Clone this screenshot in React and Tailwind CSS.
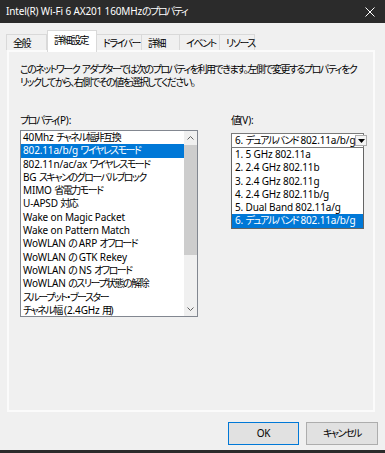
import React from 'react';

const properties = [
  '40Mhz チャネル幅非互換',
  '802.11a/b/g ワイヤレスモード',
  '802.11n/ac/ax ワイヤレスモード',
  'BG スキャンのグローバルブロック',
  'MIMO 省電力モード',
  'U-APSD 対応',
  'Wake on Magic Packet',
  'Wake on Pattern Match',
  'WoWLAN の ARP オフロード',
  'WoWLAN の GTK Rekey',
  'WoWLAN の NS オフロード',
  'WoWLAN のスリープ状態の解除',
  'スループット・ブースター',
  'チャネル幅 (2.4GHz 用)',
];

const values = [
  '1. 5 GHz 802.11a',
  '2. 2.4 GHz 802.11b',
  '3. 2.4 GHz 802.11g',
  '4. 2.4 GHz 802.11b/g',
  '5. Dual Band 802.11a/g',
  '6. デュアルバンド 802.11a/b/g',
];

const tabs = [
  { label: '全般', w: 'w-[41px]' },
  { label: '詳細設定', w: 'w-[50px]', active: true },
  { label: 'ドライバー', w: 'w-[46px]' },
  { label: '詳細', w: 'w-[39px]' },
  { label: 'イベント', w: 'w-[41px]' },
  { label: 'リソース', w: 'w-[36px]' },
];

// Japanese runs get tighter spacing so they come out as narrow as the UI font in the shot
const CJK = /([\u3000-\u30ff\u4e00-\u9fff\uff00-\uffef]+)/;
const J = ({ children }) =>
  String(children)
    .split(CJK)
    .map((part, i) =>
      CJK.test(part) ? (
        <span key={i} className="tracking-[-1.5px]">
          {part}
        </span>
      ) : (
        part
      )
    );

const Chevron = ({ up }) => (
  <svg width="7" height="4" viewBox="0 0 7 4" className="text-[#606060]">
    <path
      d={up ? 'M0.5 3.5 L3.5 0.5 L6.5 3.5' : 'M0.5 0.5 L3.5 3.5 L6.5 0.5'}
      fill="none"
      stroke="currentColor"
      strokeWidth="1"
    />
  </svg>
);

const PropertyList = () => (
  <div className="flex h-[187px] w-[178px] border border-[#828790] bg-white">
    <div className="min-w-0 flex-1 overflow-hidden">
      {properties.map((p, i) => (
        <div
          key={p}
          className={
            i === 1
              ? 'h-[13.3px] whitespace-nowrap bg-[#0078d7] pl-[2px] leading-[13.3px] text-white'
              : 'h-[13.3px] whitespace-nowrap pl-[2px] leading-[13.3px]'
          }
        >
          <J>{p}</J>
        </div>
      ))}
    </div>
    {/* scrollbar */}
    <div className="flex w-[13px] flex-col bg-[#f0f0f0]">
      <div className="flex h-[14px] items-center justify-center">
        <Chevron up />
      </div>
      <div className="h-[110px] bg-[#cdcdcd]" />
      <div className="flex-1" />
      <div className="flex h-[14px] items-center justify-center">
        <Chevron />
      </div>
    </div>
  </div>
);

const ValueSelect = () => (
  <div className="w-[133px]">
    <div className="flex h-[15px] items-center justify-between border border-[#7a7a7a] bg-white pl-[3px] pr-[1px]">
      <span className="whitespace-nowrap leading-[13px]">
        <J>{values[5]}</J>
      </span>
      <span className="flex h-[11px] w-[12px] shrink-0 items-center justify-center border border-[#adadad] bg-[#f4f4f4]">
        <svg width="7" height="4" viewBox="0 0 7 4">
          <path d="M0 0 H7 L3.5 4 Z" fill="#000" />
        </svg>
      </span>
    </div>
    <div className="border border-t-0 border-[#646464] bg-white">
      {values.map((v, i) => (
        <div
          key={v}
          className={
            i === 5
              ? 'h-[13.3px] whitespace-nowrap bg-[#0078d7] pl-[3px] leading-[13.3px] text-white'
              : 'h-[13.3px] whitespace-nowrap pl-[3px] leading-[13.3px]'
          }
        >
          <J>{v}</J>
        </div>
      ))}
    </div>
  </div>
);

export default function App() {
  return (
    <div className="flex h-[453px] w-[385px] flex-col overflow-hidden bg-[#f0f0f0] font-[family-name:'Noto_Sans','Noto_Sans_CJK_JP',sans-serif] text-[10px] tracking-[-0.15px] text-black [font-feature-settings:'palt']">
      {/* Title bar */}
      <div className="flex h-[23px] shrink-0 items-center justify-between bg-[#2b2b2b] pl-[6px] pr-[10px] text-white">
        <span className="whitespace-nowrap">
          <J>Intel(R) Wi-Fi 6 AX201 160MHzのプロパティ</J>
        </span>
        <svg width="10" height="10" viewBox="0 0 10 10">
          <path d="M0.5 0.5 L9.5 9.5 M9.5 0.5 L0.5 9.5" stroke="#fff" strokeWidth="1" />
        </svg>
      </div>

      {/* Tabs */}
      <div className="flex h-[27px] shrink-0 items-end pl-[6px]">
        {tabs.map((t) =>
          t.active ? (
            <div
              key={t.label}
              className={`${t.w} relative z-10 -mb-[2px] h-[22px] whitespace-nowrap border border-b-0 border-[#d9d9d9] bg-white pl-[6px] pt-[3px] leading-[13px]`}
            >
              <J>{t.label}</J>
            </div>
          ) : (
            <div
              key={t.label}
              className={`${t.w} -ml-px h-[16px] whitespace-nowrap border border-b-0 border-[#d9d9d9] bg-[#f0f0f0] pl-[6px] pt-[2px] leading-[12px] first:ml-0`}
            >
              <J>{t.label}</J>
            </div>
          )
        )}
      </div>

      {/* Tab panel */}
      <div className="ml-[7px] mr-[10px] h-[362px] shrink-0 border-2 border-[#fbfbfb] pl-[11px] pt-[11px]">
        <p className="whitespace-nowrap leading-[13px]">
          <J>このネットワーク アダプターでは次のプロパティを利用できます。左側で変更するプロパティをク</J>
          <br />
          <J>リックしてから、右側でその値を選択してください。</J>
        </p>

        <div className="mt-[25px] flex gap-[33px]">
          <div>
            <div className="mb-[4px] leading-[12px]">
              <J>プロパティ(P):</J>
            </div>
            <PropertyList />
          </div>
          <div>
            <div className="mb-[7px] leading-[12px]">
              <J>値(V):</J>
            </div>
            <ValueSelect />
          </div>
        </div>
      </div>

      {/* Buttons */}
      <div className="flex h-[38px] shrink-0 items-start justify-end gap-[7px] pr-[7px] pt-[10px]">
        <button className="h-[23px] w-[71px] border border-[#0078d7] bg-[#e1e1e1] text-[10px]">OK</button>
        <button className="h-[23px] w-[72px] border border-[#adadad] bg-[#e1e1e1] text-[10px]">
          <J>キャンセル</J>
        </button>
      </div>
      <div className="h-[3px] shrink-0 bg-[#2b2b2b]" />
    </div>
  );
}
